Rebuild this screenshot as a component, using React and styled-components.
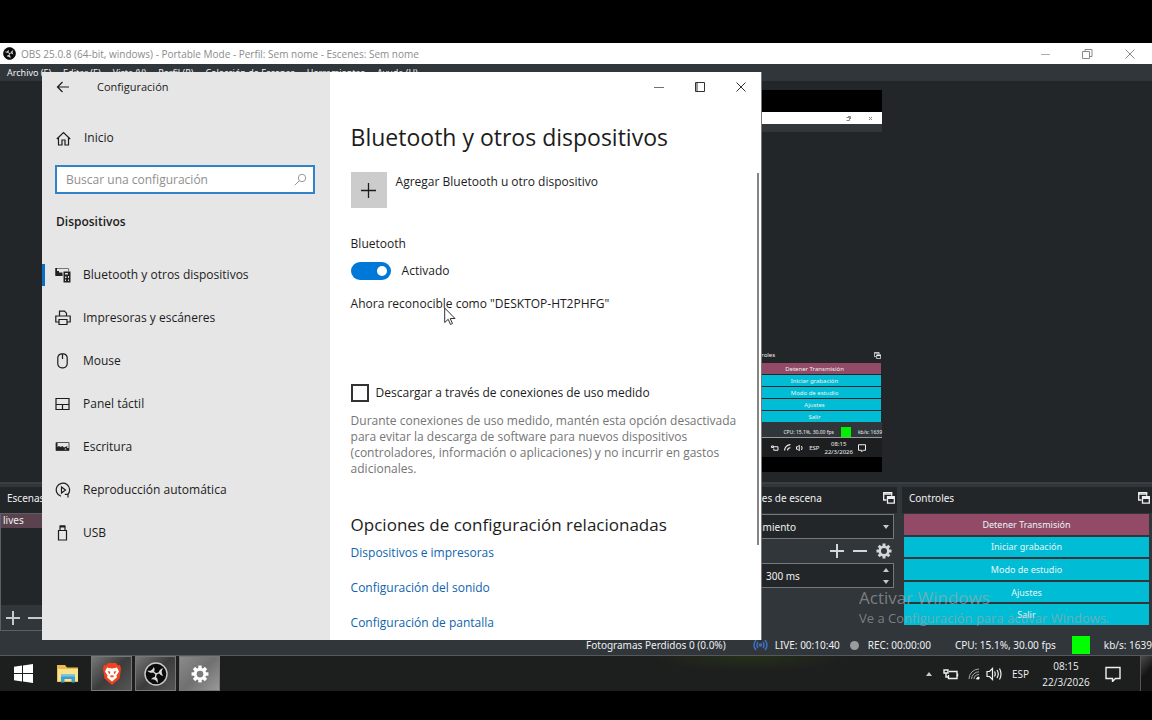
import React, { useState } from 'react';
import styled, { createGlobalStyle } from 'styled-components';

const GlobalStyle = createGlobalStyle`
  * {
    box-sizing: border-box;
  }

  body {
    margin: 0;
    background: #000;
    overflow: hidden;
  }

  button, input, select {
    font: inherit;
    color: inherit;
    margin: 0;
    padding: 0;
    border: none;
    background: none;
  }

  h1, h2, p, ul {
    margin: 0;
    padding: 0;
    font-weight: 400;
  }

  svg {
    display: block;
    flex: none;
  }
`;

const Screen = styled.div`
  height: 100vh;
  padding: 43px 0 29px;
  background: #000;
`;

const Desktop = styled.div`
  position: relative;
  height: 100%;
  display: flex;
  flex-direction: column;
  overflow: hidden;
  background: #31363b;
  color: #eff0f1;
  font-family: 'Noto Sans', 'Open Sans', sans-serif;
  font-size: 10px;
  white-space: nowrap;
`;

/* ---------- OBS window ---------- */

const TitleBar = styled.header`
  height: 21px;
  flex: none;
  display: flex;
  align-items: center;
  padding: 0 17px 0 3px;
  gap: 5px;
  background: #fff;
  color: #8c8c8c;
  font-family: 'Open Sans', sans-serif;
`;

const TitleText = styled.span`
  flex: 1;
`;

const CaptionButtons = styled.div`
  display: flex;
  align-items: center;
  gap: ${({ $gap }) => $gap};
  color: ${({ $color }) => $color};
`;

const IconButton = styled.button`
  display: flex;
  align-items: center;
  justify-content: center;
`;

const MenuBar = styled.nav`
  height: 17px;
  flex: none;
  display: flex;
  align-items: center;
  gap: 12px;
  padding: 0 7px;
  background: #31363b;
  font-size: 9px;
`;

const Preview = styled.div`
  flex: 1;
  min-height: 0;
  display: flex;
  justify-content: flex-end;
  align-items: flex-start;
  padding: 9px 270px 0 0;
  background: #232629;
  border-bottom: 2px solid #3a3f44;
`;

const Canvas = styled.div`
  height: 382px;
  width: 480px;
  display: flex;
  flex-direction: column;
  background: #232629;
  border-top: 22px solid #000;
  border-bottom: 15px solid #000;
  font-size: 6px;
`;

const MiniTitle = styled.div`
  height: 12px;
  display: flex;
  align-items: center;
  justify-content: flex-end;
  gap: 17px;
  padding-right: 9px;
  background: #fff;
  color: #888;
`;

const MiniMenu = styled.div`
  height: 8px;
  background: #31363b;
`;

const MiniDock = styled.div`
  margin-top: auto;
  align-self: flex-end;
  width: 134px;
  padding-right: 1px;
`;

const MiniHeader = styled.div`
  height: 16px;
  display: flex;
  align-items: center;
  justify-content: space-between;
`;

const MiniControls = styled.div`
  display: grid;
  gap: 1px;
`;

const MiniControl = styled.div`
  height: 11px;
  display: flex;
  align-items: center;
  justify-content: center;
  background: ${({ $active }) => ($active ? '#924a66' : '#00bcd4')};
`;

const MiniStatus = styled.div`
  height: 16px;
  flex: none;
  display: flex;
  align-items: center;
  justify-content: flex-end;
  gap: 7px;
  padding-top: 4px;
  background: #31363b;
  border-bottom: 1px solid #9a9a9a;
  font-size: 5px;
`;

const MiniGreen = styled.span`
  width: 10px;
  height: 10px;
  background: #00f000;
`;

const MiniTaskbar = styled.div`
  height: 19px;
  flex: none;
  display: flex;
  align-items: center;
  justify-content: flex-end;
  gap: 5px;
  padding-right: 16px;
  background: #1d1e1f;
`;

const MiniClock = styled.div`
  line-height: 8px;
  text-align: center;
`;

const Docks = styled.div`
  flex: none;
  display: flex;
  gap: 5px;
  padding-top: 3px;
  height: 151px;
`;

const Dock = styled.section`
  flex: ${({ $width }) => ($width ? `0 0 ${$width}` : '1')};
  min-width: 0;
  display: flex;
  flex-direction: column;
`;

const DockHeader = styled.div`
  height: 26px;
  display: flex;
  align-items: center;
  justify-content: space-between;
  padding: 0 2px 4px 7px;
  background: #232629;
`;

const SceneList = styled.ul`
  flex: 1;
  list-style: none;
  background: #232629;
  border: 1px solid #5b6066;
  border-bottom: none;
`;

const Scene = styled.li`
  height: 14px;
  line-height: 12px;
  padding-left: 2px;
  background: #5a424e;
`;

const SceneTools = styled.div`
  height: 26px;
  margin-bottom: 4px;
  display: flex;
  align-items: center;
  gap: 8px;
  padding-left: 5px;
  border: 1px solid #5b6066;
  border-top: none;
  color: #c8c9ca;
`;

const TransitionBody = styled.div`
  display: flex;
  flex-direction: column;
  padding: 1px 3px 0 0;
`;

const Field = styled.div`
  height: 25px;
  display: flex;
  align-items: center;
  padding: 0 4px 0 ${({ $indent }) => $indent};
  background: #232629;
  border: 1px solid #76797c;
`;

const FieldSelect = styled.select`
  flex: 1;
  appearance: none;
`;

const FieldInput = styled.input`
  flex: 1;
  min-width: 0;
`;

const Spinner = styled.div`
  display: flex;
  flex-direction: column;
  gap: 8px;
`;

const TransitionTools = styled.div`
  height: 24px;
  display: flex;
  align-items: center;
  justify-content: flex-end;
  gap: 9px;
  padding-right: 2px;
  color: #d5d6d7;
`;

const Controls = styled.div`
  height: 112px;
  display: grid;
  gap: 2px;
  padding: 1px 3px 0 2px;
`;

const ControlButton = styled.button`
  background: ${({ $active }) => ($active ? '#924a66' : '#00bcd4')};
  color: #e8f6f8;
  font-size: 9px;
`;

const StatusBar = styled.footer`
  height: 20px;
  flex: none;
  display: flex;
  align-items: center;
  justify-content: flex-end;
  background: #31363b;
`;

const StatusItem = styled.span`
  display: flex;
  align-items: center;
  gap: 6px;
  margin-left: ${({ $space }) => $space};
`;

const GreenSquare = styled.span`
  width: 18px;
  height: 18px;
  margin: 0 14px 0 16px;
  background: #00ff00;
`;

const RecDot = styled.span`
  width: 9px;
  height: 9px;
  margin-right: 3px;
  border-radius: 50%;
  background: #9b9b9b;
`;

const Watermark = styled.div`
  position: absolute;
  right: 46px;
  bottom: 63px;
  width: 247px;
  color: rgba(165, 168, 170, 0.65);
  font-family: 'Open Sans', sans-serif;
  font-size: 13px;
  line-height: 20px;
  pointer-events: none;
`;

const WatermarkTitle = styled.div`
  font-size: 17px;
`;

/* ---------- Taskbar ---------- */

const Taskbar = styled.div`
  height: 36px;
  flex: none;
  display: flex;
  align-items: stretch;
  padding-left: 3px;
  border-top: 1px solid #55595c;
  background:
    radial-gradient(ellipse 100px 16px at 65% 0, #25301a, transparent),
    #1d1e1e;
`;

const TaskButton = styled.button`
  width: 41px;
  margin-right: 3px;
  display: flex;
  align-items: center;
  justify-content: center;
  color: #fff;
  border: 1px solid ${({ $tone }) => ($tone ? '#777' : 'transparent')};
  background: ${({ $tone }) =>
    $tone === 'active'
      ? 'linear-gradient(135deg, #8b8b8b, #707070 50%, #999)'
      : $tone === 'open'
        ? 'linear-gradient(135deg, #777, #3c3c3c 50%, #555)'
        : 'none'};
`;

const Tray = styled.div`
  margin-left: auto;
  display: flex;
  align-items: center;
  font-family: 'Open Sans', sans-serif;
`;

const TrayItem = styled.button`
  display: flex;
  align-items: center;
  margin-right: ${({ $space }) => $space};
`;

const Clock = styled.button`
  width: 48px;
  margin-right: 15px;
  line-height: 16px;
  text-align: center;
`;

const ShowDesktop = styled.button`
  width: 12px;
  height: 100%;
  background: linear-gradient(135deg, #4b4b4b, #151515 50%);
  border-left: 1px solid #555;
`;

/* ---------- Settings window ---------- */

const SettingsWindow = styled.div`
  position: absolute;
  left: 42px;
  top: 29px;
  bottom: 51px;
  width: 720px;
  display: flex;
  background: #fff;
  color: #1c1c1c;
  border-right: 1px solid #777;
  font-family: 'Open Sans', 'Noto Sans', sans-serif;
  font-size: 12px;
  line-height: 16px;
  overflow: hidden;
`;

const Sidebar = styled.aside`
  flex: 0 0 40%;
  display: flex;
  flex-direction: column;
  background: #e6e6e6;
`;

const SidebarTitle = styled.div`
  height: 30px;
  display: flex;
  align-items: center;
  gap: 27px;
  padding-left: 14px;
  font-size: 11px;
`;

const Home = styled.a`
  display: flex;
  align-items: center;
  gap: 13px;
  margin-top: 28px;
  padding-left: 14px;
  color: inherit;
  text-decoration: none;
`;

const SearchBox = styled.label`
  height: 29px;
  display: flex;
  align-items: center;
  margin: 19px 15px 0 13px;
  padding: 0 6px 0 9px;
  background: #fff;
  border: 2px solid #3182c8;
  color: #999;

  input {
    flex: 1;
    outline: none;
  }

  input::placeholder {
    color: #8f8f8f;
  }
`;

const Category = styled.div`
  margin: 20px 0 0 14px;
  font-weight: 600;
`;

const NavList = styled.ul`
  margin-top: 23px;
  list-style: none;
`;

const NavItem = styled.a`
  height: 43px;
  display: flex;
  align-items: center;
  gap: 12px;
  color: inherit;
  text-decoration: none;

  &::before {
    content: '';
    width: 3px;
    height: 22px;
    margin-right: -2px;
    background: ${({ $active }) => ($active ? '#0a6fc2' : 'transparent')};
  }
`;

const Content = styled.main`
  flex: 1;
  display: flex;
  flex-direction: column;
`;

const WindowBar = styled.div`
  height: 30px;
  display: flex;
  align-items: center;
  justify-content: flex-end;
  padding-right: 15px;
`;

const ContentBody = styled.div`
  padding: 18px 20px 0 21px;
  display: flex;
  flex-direction: column;
  align-items: flex-start;
`;

const PageTitle = styled.h1`
  font-size: 23px;
  line-height: 34px;
`;

const AddDevice = styled.button`
  display: flex;
  align-items: flex-start;
  gap: 9px;
  margin-top: 18px;
`;

const AddIcon = styled.span`
  width: 36px;
  height: 36px;
  display: flex;
  align-items: center;
  justify-content: center;
  background: #ccc;
`;

const AddText = styled.span`
  padding-top: 2px;
`;

const Label = styled.div`
  margin-top: 28px;
`;

const ToggleRow = styled.label`
  display: flex;
  align-items: center;
  gap: 11px;
  margin-top: 10px;
`;

const Toggle = styled.input`
  appearance: none;
  width: 40px;
  height: 18px;
  display: flex;
  align-items: center;
  justify-content: flex-start;
  padding: 0 4px;
  border-radius: 9px;
  background: #777;

  &:checked {
    justify-content: flex-end;
    background: #0078d7;
  }

  &::before {
    content: '';
    width: 10px;
    height: 10px;
    border-radius: 50%;
    background: #fff;
  }
`;

const Discoverable = styled.p`
  margin-top: 16px;
`;

const CheckRow = styled.label`
  display: flex;
  align-items: center;
  gap: 7px;
  margin-top: 72px;
`;

const CheckBox = styled.input`
  appearance: none;
  width: 18px;
  height: 18px;
  border: 2px solid #333;

  &:checked {
    background: #0078d7;
  }
`;

const Hint = styled.p`
  margin-top: 11px;
  color: #757575;
  white-space: normal;
`;

const SectionTitle = styled.h2`
  margin-top: 36px;
  font-size: 17px;
  line-height: 24px;
`;

const RelatedLink = styled.a`
  margin-top: ${({ $first }) => ($first ? '8px' : '19px')};
  color: #0f64ad;
  text-decoration: none;
`;

const ScrollThumb = styled.div`
  position: absolute;
  right: 2px;
  top: 101px;
  width: 2px;
  height: 372px;
  background: #858585;
`;

const Pointer = styled.div`
  position: absolute;
  left: 444px;
  top: 264px;
`;

/* ---------- Icons ---------- */

const Stroke = ({ w = 16, h = w, vb, sw = 1, children }) => (
  <svg width={w} height={h} viewBox={vb || `0 0 ${w} ${h}`} fill="none" stroke="currentColor" strokeWidth={sw}>
    {children}
  </svg>
);

const ObsIcon = ({ size, ring }) => (
  <svg width={size} height={size} viewBox="0 0 24 24">
    <circle cx="12" cy="12" r="11" fill="#0b0b0b" stroke={ring} strokeWidth="1.4" />
    {[-50, 70, 190].map((angle) => (
      <path
        key={angle}
        transform={`rotate(${angle} 12 12)`}
        d="M11.300 12.500L11.300 8.800C9.500 7.800 8.600 5.800 9 3.200C10.400 5.800 12.600 6.800 16 5.800C15.400 7.600 14.200 8.600 12.700 8.900L12.700 12.500Z"
        fill="#d8d8d8"
      />
    ))}
  </svg>
);

const Minimize = ({ w = 9 }) => (
  <Stroke w={w} h={10}><path d={`M0 5.500H${w}`} opacity="0.7" /></Stroke>
);

const Restore = () => (
  <Stroke w={11} h={10}><path d="M.5 2.500h7v7h-7zM3 2V.5h7v7H8" /></Stroke>
);

const Close = () => (
  <Stroke w={10}><path d="M.5.5l9 9M9.500.5l-9 9" /></Stroke>
);

const DetachIcon = ({ w = 12 }) => (
  <Stroke w={w} vb="0 0 12 12" sw={1.3}>
    <path d="M3.500 8H.7V.7h8v3" />
    <path d="M.7 2h8M4.500 4.700h6.800v6.500H4.500z" />
    <path d="M4.500 6h7" strokeWidth="2" />
  </Stroke>
);

const PlusIcon = ({ w = 14, sw = 2 }) => (
  <Stroke w={w} vb="0 0 14 14" sw={sw}><path d="M7 0v14M0 7h14" /></Stroke>
);

const MinusIcon = () => (
  <Stroke w={14} sw={2}><path d="M0 7h14" /></Stroke>
);

const GearIcon = ({ w = 16, hole = '#31363b' }) => (
  <svg width={w} height={w} viewBox="0 0 16 16" fill="currentColor">
    {[0, 45, 90, 135].map((angle) => (
      <rect key={angle} x="6.500" y="0.500" width="3" height="15" transform={`rotate(${angle} 8 8)`} />
    ))}
    <circle cx="8" cy="8" r="5.500" />
    <circle cx="8" cy="8" r="3" fill={hole} />
  </svg>
);

const Caret = ({ up }) => (
  <svg width="6" height="4" viewBox="0 0 6 4" fill="#c8c8c8">
    <path d={up ? 'M0 4L3 0l3 4z' : 'M0 0h6L3 4z'} />
  </svg>
);

const BackIcon = () => (
  <Stroke w={14} sw={1.2}><path d="M13 7H1.500M6.500 2l-5 5 5 5" /></Stroke>
);

const HomeIcon = () => (
  <Stroke w={15} sw={1.2}><path d="M.8 8L7.500 1.500 14.200 8M2.500 6.500v7.500h3.500V9h3v5h3.500V6.500" /></Stroke>
);

const SearchIcon = () => (
  <Stroke w={13}><circle cx="8" cy="5" r="3.700" /><path d="M5.300 7.700L.8 12.200" /></Stroke>
);

const DevicesIcon = () => (
  <svg width="16" height="16" viewBox="0 0 16 16">
    <path d="M.6 1v7.400h7M.6 1.500h13v3" fill="none" stroke="#777" strokeWidth="1" />
    <path d="M.5 1h1.500v3h2v1.500h3.500V9H.5z" fill="#222" />
    <path d="M8.500 4.500h7v11h-7z" fill="#222" />
    <path d="M10 6h3v1.500h-3zM10 9.500h1.500v1.500H10zM13 9h1v2h-1zM10 12.500h1v1.500h-1zM13 12.500h1v1.500h-1z" fill="#ddd" />
  </svg>
);

const PrinterIcon = () => (
  <Stroke w={16} sw={1.2}><path d="M4.500 6V1.200h5l2 2V6M4 12H.8V6h14.400v6H12M4 9.500h8v5H4z" /></Stroke>
);

const MouseIcon = () => (
  <Stroke w={16} sw={1.2}><rect x="2.800" y=".8" width="9.400" height="14" rx="4" /><path d="M7.500 1v5" /></Stroke>
);

const TouchpadIcon = () => (
  <Stroke w={16} sw={1.2}><path d="M1 2.500h13v11H1zM1 8.500h13M7.500 8.500v5" /></Stroke>
);

const KeyboardIcon = () => (
  <svg width="16" height="16" viewBox="0 0 16 16">
    <path d="M1 3.500h13v8H1z" fill="none" stroke="#555" />
    <path d="M1 4h1.500v4l1.500-1 1.500 1 2-1 1.500 1.500L12.500 7 12 9h2v2.500H1z" fill="#222" />
    <path d="M9.500 10.500l1-1.500 1 1.500z" fill="#e6e6e6" />
  </svg>
);

const AutoplayIcon = () => (
  <Stroke w={16} sw={1.2}>
    <path d="M6 14.300A6.700 6.700 0 1 1 12.500 12.800M13 15.500v-3.200H9.800" />
    <path d="M6.500 5v6l4-3z" />
  </Stroke>
);

const UsbIcon = () => (
  <Stroke w={16} sw={1.2}><path d="M3.500 5.500h8v9.500h-8zM5 5.500V1h5v4.500" /><path d="M5 1.500h5" strokeWidth="2" /></Stroke>
);

const WindowsLogo = () => (
  <svg width="19" height="19" viewBox="0 0 19 19" fill="#fff">
    <path d="M0 2.700L8 1.500V9H0zM9 1.400L19 0v9H9zM0 10h8v7.500l-8-1.200zM9 10h10v9L9 17.600z" />
  </svg>
);

const FolderIcon = () => (
  <svg width="22" height="19" viewBox="0 0 22 19">
    <path d="M0 1h8l2 2.500h11V18H0z" fill="#e9bd4d" />
    <path d="M1 5h20v12H1z" fill="#fbe38e" />
    <path d="M4 18.500v-8h14v8h-3.500V15h-7v3.500z" fill="#3f9fd0" />
    <path d="M4 10.500h14v2H4z" fill="#72c6e8" />
  </svg>
);

const BraveIcon = () => (
  <svg width="18" height="22" viewBox="0 0 18 22">
    <path d="M5 0h8l2 2.200 2-.2 1 4-1.500 9.500L9 22 1.500 15.500 0 6l1-4 2 .2z" fill="#f0421c" />
    <path d="M4 4.500L9 5.500l5-1 2 4-2.500 4 .3 2L9 18.500l-4.800-4 .3-2L2 8.500z" fill="#fff" />
    <path d="M4.500 8l3 .8-1 2.500zM13.500 8l-3 .8 1 2.500zM6.500 13L9 14.500l2.500-1.500L9 12.200z" fill="#f0421c" />
  </svg>
);

const BroadcastIcon = () => (
  <Stroke w={17} h={12} sw={1.5}>
    <path d="M4 1Q0 6 4 11M13 1q4 5 0 10M6 3Q4 6 6 9M11 3q2 3 0 6" stroke="#3c70c0" />
    <circle cx="8.500" cy="6" r="1.800" fill="#3c70c0" stroke="none" />
  </Stroke>
);

const BatteryIcon = () => (
  <Stroke w={16} h={14} sw={1.4}>
    <path d="M6 4.500h8v7H5.500V8M14.500 6.500v3" />
    <path d="M1 3h4v3H1zM3 6v4h2" />
  </Stroke>
);

const WifiIcon = () => (
  <Stroke w={12} h={12}>
    <path d="M1 11A10 10 0 0 1 11 1M3.500 11A7.500 7.500 0 0 1 11 3.800M6 11a5 5 0 0 1 5-4.500" stroke="#a5a5a5" />
    <path d="M8.500 11a2.500 2.500 0 0 1 2.500-2v2z" fill="#fff" />
  </Stroke>
);

const SpeakerIcon = () => (
  <Stroke w={16} h={14} sw={1.2}>
    <path d="M1 4.500h2.500L6.500 1.500v11l-3-3H1zM8.500 4.500q1.500 2.500 0 5M11 3q2.500 4 0 8M13.500 1.500q3 5.500 0 11" />
  </Stroke>
);

const NotificationIcon = () => (
  <Stroke w={16} sw={1.4}><path d="M1 1.500h14v11h-4.500l-3 3v-3H1z" /></Stroke>
);

const CursorIcon = () => (
  <svg width="12" height="19" viewBox="0 0 12 19">
    <path d="M.7 1v14.500l3.500-3.200 2.300 5.200 2-1-2.300-5H11z" fill="#fff" stroke="#333" />
  </svg>
);

const menus = [
  'Archivo (F)',
  'Editar (E)',
  'Vista (V)',
  'Perfil (P)',
  'Colección de Escenas',
  'Herramientas',
  'Ayuda (H)',
];

const controls = ['Detener Transmisión', 'Iniciar grabación', 'Modo de estudio', 'Ajustes', 'Salir'];

const navItems = [
  { label: 'Bluetooth y otros dispositivos', icon: DevicesIcon },
  { label: 'Impresoras y escáneres', icon: PrinterIcon },
  { label: 'Mouse', icon: MouseIcon },
  { label: 'Panel táctil', icon: TouchpadIcon },
  { label: 'Escritura', icon: KeyboardIcon },
  { label: 'Reproducción automática', icon: AutoplayIcon },
  { label: 'USB', icon: UsbIcon },
];

const links = ['Dispositivos e impresoras', 'Configuración del sonido', 'Configuración de pantalla'];

const ObsPreview = () => (
  <Preview>
    <Canvas>
      <MiniTitle>
        <Stroke w={5}><path d="M.5 1.500h3v3h-3M2 .5h2.500V3" /></Stroke>
        <Stroke w={5}><path d="M1 1l3 3M4 1L1 4" /></Stroke>
      </MiniTitle>
      <MiniMenu />
      <MiniDock>
        <MiniHeader>
          <span>Controles</span>
          <DetachIcon w={7} />
        </MiniHeader>
        <MiniControls>
          {controls.map((label, i) => (
            <MiniControl key={label} $active={i === 0}>{label}</MiniControl>
          ))}
        </MiniControls>
      </MiniDock>
      <MiniStatus>
        <span>CPU: 15.1%, 30.00 fps</span>
        <MiniGreen />
        <span>kb/s: 1639</span>
      </MiniStatus>
      <MiniTaskbar>
        <Stroke w={8} vb="0 0 16 14" sw={2}><path d="M6 4.500h8v7H5.500V8M1 3h4v3H1z" /></Stroke>
        <Stroke w={7} vb="0 0 12 12" sw={2}><path d="M1 11A10 10 0 0 1 11 1M6 11a5 5 0 0 1 5-4.500" /></Stroke>
        <Stroke w={8} vb="0 0 16 14" sw={2}><path d="M1 4.500h2.500L6.500 1.500v11l-3-3H1zM11 3q2.500 4 0 8" /></Stroke>
        <span>ESP</span>
        <MiniClock>
          <div>08:15</div>
          <div>22/3/2026</div>
        </MiniClock>
        <Stroke w={8} vb="0 0 16 16" sw={2}><path d="M1 1.500h14v11h-4.500l-3 3v-3H1z" /></Stroke>
      </MiniTaskbar>
    </Canvas>
  </Preview>
);

const ObsDocks = () => (
  <Docks>
    <Dock>
      <DockHeader>Escenas</DockHeader>
      <SceneList>
        <Scene>lives</Scene>
      </SceneList>
      <SceneTools>
        <IconButton aria-label="Agregar escena"><PlusIcon /></IconButton>
        <IconButton aria-label="Quitar escena"><MinusIcon /></IconButton>
      </SceneTools>
    </Dock>
    <Dock $width="190px">
      <DockHeader>
        <span>Transiciones de escena</span>
        <DetachIcon />
      </DockHeader>
      <TransitionBody>
        <Field $indent="7px">
          <FieldSelect aria-label="Transición">
            <option>Desvanecimiento</option>
          </FieldSelect>
          <Caret />
        </Field>
        <TransitionTools>
          <IconButton aria-label="Agregar"><PlusIcon /></IconButton>
          <IconButton aria-label="Quitar"><MinusIcon /></IconButton>
          <IconButton aria-label="Propiedades"><GearIcon /></IconButton>
        </TransitionTools>
        <Field $indent="58px">
          <FieldInput aria-label="Duración" defaultValue="300 ms" />
          <Spinner>
            <IconButton aria-label="Aumentar"><Caret up /></IconButton>
            <IconButton aria-label="Reducir"><Caret /></IconButton>
          </Spinner>
        </Field>
      </TransitionBody>
    </Dock>
    <Dock $width="250px">
      <DockHeader>
        <span>Controles</span>
        <DetachIcon />
      </DockHeader>
      <Controls>
        {controls.map((label, i) => (
          <ControlButton key={label} $active={i === 0}>{label}</ControlButton>
        ))}
      </Controls>
    </Dock>
  </Docks>
);

const Settings = () => {
  const [enabled, setEnabled] = useState(true);
  const [metered, setMetered] = useState(false);

  return (
    <SettingsWindow>
      <Sidebar>
        <SidebarTitle>
          <IconButton aria-label="Atrás"><BackIcon /></IconButton>
          <span>Configuración</span>
        </SidebarTitle>
        <Home href="#inicio">
          <HomeIcon />
          Inicio
        </Home>
        <SearchBox>
          <input type="text" placeholder="Buscar una configuración" aria-label="Buscar una configuración" />
          <SearchIcon />
        </SearchBox>
        <Category>Dispositivos</Category>
        <NavList>
          {navItems.map(({ label, icon: Icon }, i) => (
            <li key={label}>
              <NavItem href={`#${i}`} $active={i === 0}>
                <Icon />
                {label}
              </NavItem>
            </li>
          ))}
        </NavList>
      </Sidebar>
      <Content>
        <WindowBar>
          <CaptionButtons $gap="31px" $color="#333">
            <IconButton aria-label="Minimizar"><Minimize w={10} /></IconButton>
            <IconButton aria-label="Maximizar">
              <Stroke w={10}><path d="M.5.5h9v9h-9zM2 0v10" /></Stroke>
            </IconButton>
            <IconButton aria-label="Cerrar"><Close /></IconButton>
          </CaptionButtons>
        </WindowBar>
        <ContentBody>
          <PageTitle>Bluetooth y otros dispositivos</PageTitle>
          <AddDevice>
            <AddIcon><PlusIcon w={15} sw={1.2} /></AddIcon>
            <AddText>Agregar Bluetooth u otro dispositivo</AddText>
          </AddDevice>
          <Label>Bluetooth</Label>
          <ToggleRow>
            <Toggle type="checkbox" role="switch" checked={enabled} onChange={() => setEnabled(!enabled)} />
            {enabled ? 'Activado' : 'Desactivado'}
          </ToggleRow>
          <Discoverable>Ahora reconocible como "DESKTOP-HT2PHFG"</Discoverable>
          <CheckRow>
            <CheckBox type="checkbox" checked={metered} onChange={() => setMetered(!metered)} />
            Descargar a través de conexiones de uso medido
          </CheckRow>
          <Hint>
            Durante conexiones de uso medido, mantén esta opción desactivada para evitar la descarga
            de software para nuevos dispositivos (controladores, información o aplicaciones) y no
            incurrir en gastos adicionales.
          </Hint>
          <SectionTitle>Opciones de configuración relacionadas</SectionTitle>
          {links.map((label, i) => (
            <RelatedLink key={label} href={`#enlace-${i}`} $first={i === 0}>{label}</RelatedLink>
          ))}
        </ContentBody>
      </Content>
      <ScrollThumb />
    </SettingsWindow>
  );
};

const SystemTaskbar = () => (
  <Taskbar>
    <TaskButton aria-label="Inicio"><WindowsLogo /></TaskButton>
    <TaskButton aria-label="Explorador de archivos"><FolderIcon /></TaskButton>
    <TaskButton aria-label="Brave" $tone="open"><BraveIcon /></TaskButton>
    <TaskButton aria-label="OBS" $tone="open"><ObsIcon size={24} ring="#ccc" /></TaskButton>
    <TaskButton aria-label="Configuración" $tone="active"><GearIcon w={18} hole="#7c7c7c" /></TaskButton>
    <Tray>
      <TrayItem $space="11px" aria-label="Iconos ocultos"><Caret up /></TrayItem>
      <TrayItem $space="9px" aria-label="Batería"><BatteryIcon /></TrayItem>
      <TrayItem $space="6px" aria-label="Red"><WifiIcon /></TrayItem>
      <TrayItem $space="10px" aria-label="Volumen"><SpeakerIcon /></TrayItem>
      <TrayItem $space="13px">ESP</TrayItem>
      <Clock>
        <div>08:15</div>
        <div>22/3/2026</div>
      </Clock>
      <TrayItem $space="19px" aria-label="Notificaciones"><NotificationIcon /></TrayItem>
      <ShowDesktop aria-label="Mostrar escritorio" />
    </Tray>
  </Taskbar>
);

const App = () => (
  <Screen>
    <GlobalStyle />
    <Desktop>
      <TitleBar>
        <ObsIcon size={13} ring="#0b0b0b" />
        <TitleText>OBS 25.0.8 (64-bit, windows) - Portable Mode - Perfil: Sem nome - Escenes: Sem nome</TitleText>
        <CaptionButtons $gap="32px" $color="#8a8a8a">
          <IconButton aria-label="Minimizar"><Minimize /></IconButton>
          <IconButton aria-label="Restaurar"><Restore /></IconButton>
          <IconButton aria-label="Cerrar"><Close /></IconButton>
        </CaptionButtons>
      </TitleBar>
      <MenuBar>
        {menus.map((menu) => <span key={menu}>{menu}</span>)}
      </MenuBar>
      <ObsPreview />
      <ObsDocks />
      <StatusBar>
        <StatusItem>Fotogramas Perdidos 0 (0.0%)</StatusItem>
        <StatusItem $space="26px"><BroadcastIcon />LIVE: 00:10:40</StatusItem>
        <StatusItem $space="10px"><RecDot />REC: 00:00:00</StatusItem>
        <StatusItem $space="24px">CPU: 15.1%, 30.00 fps</StatusItem>
        <GreenSquare />
        <span>kb/s: 1639</span>
      </StatusBar>
      <SystemTaskbar />
      <Watermark>
        <WatermarkTitle>Activar Windows</WatermarkTitle>
        Ve a Configuración para activar Windows.
      </Watermark>
      <Settings />
      <Pointer><CursorIcon /></Pointer>
    </Desktop>
  </Screen>
);

export default App;
